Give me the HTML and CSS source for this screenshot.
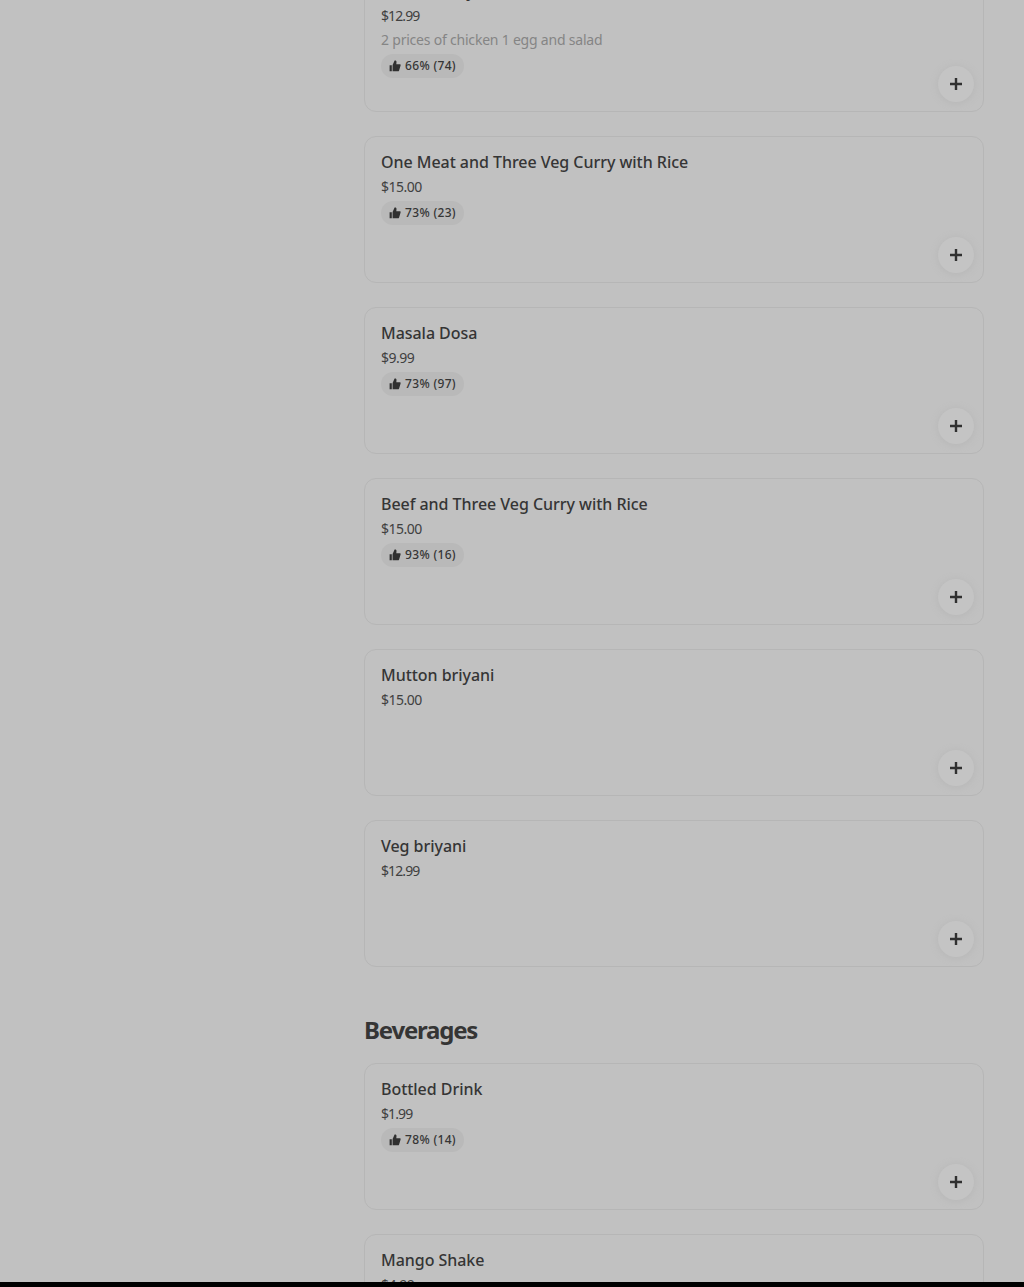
FILE: index.html
```html
<!DOCTYPE html>
<html lang="en">
<head>
<meta charset="utf-8">
<title>Menu</title>
<link rel="stylesheet" href="styles.css">
</head>
<body>
<svg width="0" height="0" class="sprite" aria-hidden="true">
<symbol id="thumb" viewBox="0 0 12 12"><path d="M.6 5.2h2.2v6.1H.6zM3.6 5 5.6.5h.6c.9 0 1.4.7 1.3 1.4L7.3 4.2h3.4c.7 0 1.1.6.9 1.2l-1.5 5c-.2.6-.6.9-1.2.9H3.6z"/></symbol>
<symbol id="plus" viewBox="0 0 12 12"><path d="M4.8 0h2.4v4.8H12v2.4H7.2V12H4.8V7.2H0V4.8h4.8z"/></symbol>
</svg>
<main class="menu">
<section class="items">
<article class="card"><h3>Chicken briyani</h3><p class="price nines">$12.99</p><p class="description">2 prices of chicken 1 egg and salad</p><p class="rating"><svg><use href="#thumb"/></svg><span>66% (74)</span></p><button aria-label="Add"><svg><use href="#plus"/></svg></button></article>
<article class="card"><h3>One Meat and Three Veg Curry with Rice</h3><p class="price">$15.00</p><p class="rating"><svg><use href="#thumb"/></svg><span>73% (23)</span></p><button aria-label="Add"><svg><use href="#plus"/></svg></button></article>
<article class="card"><h3>Masala Dosa</h3><p class="price">$9.99</p><p class="rating"><svg><use href="#thumb"/></svg><span>73% (97)</span></p><button aria-label="Add"><svg><use href="#plus"/></svg></button></article>
<article class="card"><h3>Beef and Three Veg Curry with Rice</h3><p class="price">$15.00</p><p class="rating"><svg><use href="#thumb"/></svg><span>93% (16)</span></p><button aria-label="Add"><svg><use href="#plus"/></svg></button></article>
<article class="card"><h3>Mutton briyani</h3><p class="price">$15.00</p><button aria-label="Add"><svg><use href="#plus"/></svg></button></article>
<article class="card"><h3>Veg briyani</h3><p class="price nines">$12.99</p><button aria-label="Add"><svg><use href="#plus"/></svg></button></article>
</section>
<h2>Beverages</h2>
<section class="items">
<article class="card"><h3>Bottled Drink</h3><p class="price nines">$1.99</p><p class="rating"><svg><use href="#thumb"/></svg><span>78% (14)</span></p><button aria-label="Add"><svg><use href="#plus"/></svg></button></article>
<article class="card"><h3>Mango Shake</h3><p class="price">$4.99</p><button aria-label="Add"><svg><use href="#plus"/></svg></button></article>
</section>
</main>
<footer class="bar"></footer>
</body>
</html>
```
FILE: styles.css
```css
* { box-sizing: border-box; }
body {
  margin: 0;
  height: 1287px;
  overflow: hidden;
  background: #c1c1c1;
  color: #353535;
  font-family: "Noto Sans", "Open Sans", sans-serif;
}
h2, h3, p { margin: 0; }
.sprite { position: absolute; }
.menu {
  height: 1282px;
  padding: 0 40px 0 364px;
  overflow: hidden;
}
.items { display: flex; flex-direction: column; gap: 24px; }
.items:first-child { margin-top: -35px; }
.card {
  position: relative;
  flex: none;
  display: flex;
  flex-direction: column;
  align-items: flex-start;
  height: 147px;
  padding: 13px 16px;
  border: 1px solid #b6b6b6;
  border-radius: 12px;
}
h3 {
  font-size: 16px;
  line-height: 24px;
  font-weight: 500;
  letter-spacing: -0.04px;
  white-space: nowrap;
}
.price, .description {
  font-size: 14px;
  line-height: 20px;
  letter-spacing: -0.5px;
  margin-top: 3px;
}
.price { color: #404040; }
.nines { letter-spacing: -0.9px; }
.description { color: #858585; margin-top: 4px; letter-spacing: -0.21px; }
.rating {
  display: flex;
  align-items: center;
  gap: 4px;
  height: 24px;
  margin-top: 4px;
  padding: 0 8px;
  border-radius: 12px;
  background: #b9b9b9;
  font-size: 12px;
  line-height: 20px;
  font-weight: 500;
  letter-spacing: 0.33px;
}
.rating svg { width: 12px; height: 12px; }
svg { fill: #303030; }
button {
  position: absolute;
  right: 9px;
  bottom: 9px;
  display: flex;
  align-items: center;
  justify-content: center;
  width: 36px;
  height: 36px;
  padding: 0;
  border: 0;
  border-radius: 50%;
  background: #c4c4c4;
  box-shadow: 0 1px 7px 1px #b8b8b8;
}
button svg { width: 12px; height: 12px; }
h2 {
  margin: 47px 0 17px;
  font-size: 24px;
  line-height: 32px;
  font-weight: 700;
  letter-spacing: -1.2px;
}
.bar { height: 5px; background: #000; }
```
